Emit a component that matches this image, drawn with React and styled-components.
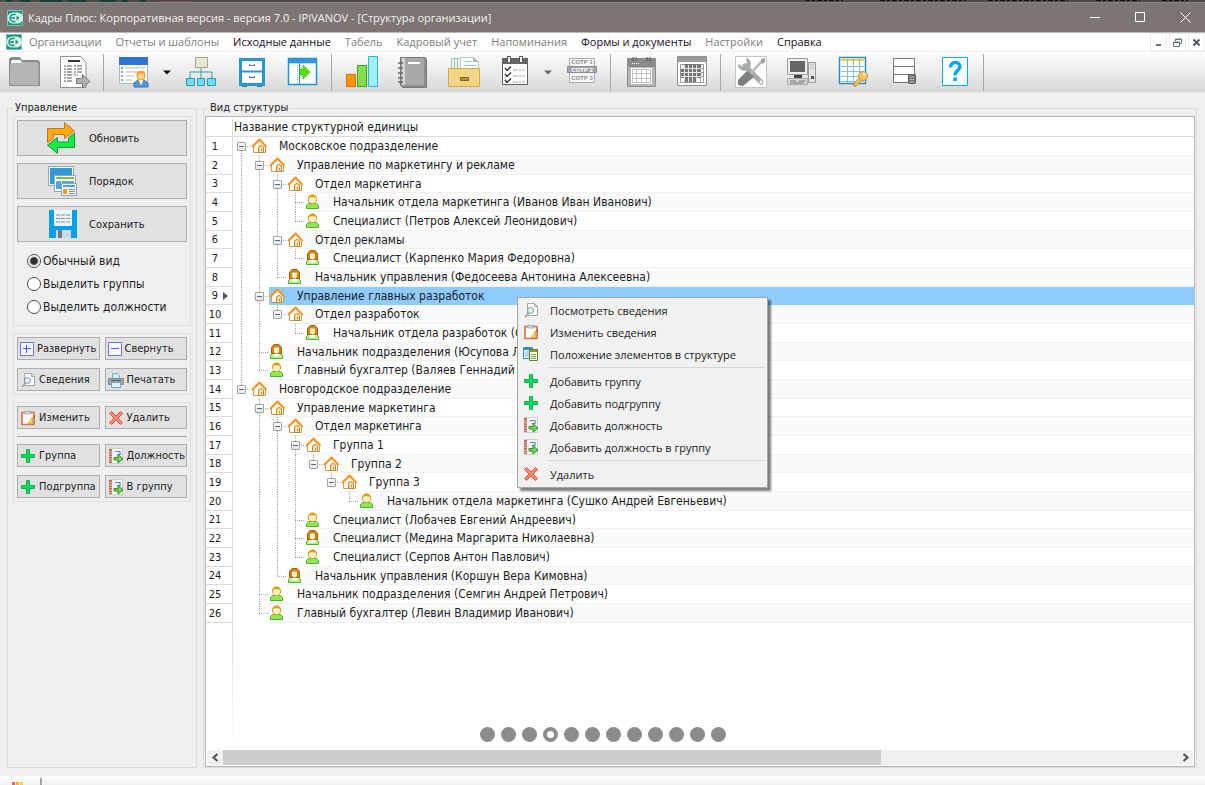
import React, { useState } from 'react';
import styled, { createGlobalStyle, css } from 'styled-components';

const GlobalStyle = createGlobalStyle`
  * {
    box-sizing: border-box;
  }

  body {
    margin: 0;
    overflow: hidden;
    background: #efefef;
    color: #1c1c24;
    font-family: 'DejaVu Sans Condensed', 'DejaVu Sans', sans-serif;
    font-size: 11px;
  }

  button,
  input {
    margin: 0;
    font: inherit;
    color: inherit;
  }

  svg {
    display: block;
    flex: none;
  }
`;

const uiFont = "'Open Sans', 'Noto Sans', sans-serif";

const Window = styled.div`
  position: relative;
  display: flex;
  flex-direction: column;
  height: 100vh;
`;

const Backdrop = styled.div`
  display: flex;
  flex: none;
  justify-content: space-between;
  height: 2px;
  background: #4b4949;
`;

const TitleBar = styled.header`
  display: flex;
  flex: none;
  align-items: center;
  height: 31px;
  padding-left: 7px;
  gap: 5px;
  background: #7c7573;
  border-top: 1px solid #8b8583;
  border-bottom: 1px solid #b9b6b5;
  color: #f4f2f1;
  font-family: ${uiFont};
`;

const Title = styled.h1`
  flex: 1;
  margin: 0;
  font-size: 11px;
  font-weight: 400;
  white-space: nowrap;
`;

const WindowButton = styled.button`
  display: flex;
  align-items: center;
  justify-content: center;
  width: 40px;
  height: 28px;
  padding: 0;
  border: 0;
  background: none;
`;

const MenuBar = styled.nav`
  display: flex;
  flex: none;
  align-items: center;
  height: 18px;
  padding-left: 6px;
  background: #fff;
  font-family: ${uiFont};
  font-size: 11px;
`;

const MenuLink = styled.button`
  padding: 0 7px;
  border: 0;
  background: none;
  line-height: 18px;
  white-space: nowrap;
  color: ${(p) => (p.$active ? '#1a0c1e' : '#7d7d80')};
`;

const MdiButtons = styled.div`
  display: flex;
  gap: 2px;
  margin-left: auto;
`;

const MdiButton = styled.button`
  display: flex;
  align-items: center;
  justify-content: center;
  width: 17px;
  height: 18px;
  padding: 0;
  border: 1px solid #ececec;
  background: #fff;
`;

const ToolBar = styled.div`
  display: flex;
  flex: none;
  align-items: center;
  gap: 4px;
  height: 42px;
  border-top: 1px solid #f0f0f0;
  border-bottom: 1px solid #e6e6e6;
  background: linear-gradient(#fdfdfd, #ececec 50%, #d6d6d6);
`;

const ToolButton = styled.button`
  display: flex;
  flex: none;
  align-items: center;
  justify-content: center;
  width: ${(p) => (p.$narrow ? 12 : 47)}px;
  height: 38px;
  padding: 0;
  border: 0;
  background: none;
`;

const ToolSeparator = styled.span`
  flex: none;
  width: 4px;
  height: 37px;
  border: solid transparent;
  border-width: 0 2px 0 1px;
  background: #a8a8a8;
  background-clip: padding-box;
`;

const Main = styled.main`
  display: flex;
  flex: 1;
  gap: 6px;
  min-height: 0;
  padding: 8px 8px 8px 7px;
`;

const Group = styled.fieldset`
  display: flex;
  flex: ${(p) => (p.$grow ? '1' : '0 0 190px')};
  flex-direction: column;
  gap: 7px;
  min-width: 0;
  margin: 0;
  padding: ${(p) => (p.$grow ? '1px 1px 0' : '1px 5px')};
  border: 1px solid #dcdcdc;
`;

const Legend = styled.legend`
  margin-left: ${(p) => p.$inset}px;
  padding: 0 2px;
  line-height: 14px;
`;

const Panel = styled.section`
  display: flex;
  flex-direction: column;
  gap: 7px;
  padding: 3px;
  border: 1px solid #dfdfdf;
`;

const buttonFace = css`
  display: flex;
  align-items: center;
  border: 1px solid #adadad;
  background: #e1e1e1;
  white-space: nowrap;
`;

const BigButton = styled.button`
  ${buttonFace}
  gap: 12px;
  height: 36px;
  padding: 0 0 0 27px;
`;

const SmallButton = styled.button`
  ${buttonFace}
  gap: 3px;
  min-width: 0;
  height: 23px;
  padding: 0 0 0 2px;
`;

const ButtonPair = styled.div`
  display: grid;
  grid-template-columns: 1fr 1fr;
  gap: 5px;

  & + & {
    margin-top: 1px;
  }
`;

const Divider = styled.hr`
  width: 100%;
  margin: 0;
  border: 0;
  border-top: 1px solid #a3a3a3;
`;

const RadioList = styled.div`
  display: flex;
  flex-direction: column;
  padding-bottom: 4px;
`;

const RadioLabel = styled.label`
  display: flex;
  align-items: center;
  gap: 2px;
  height: 23px;
  padding-left: 10px;
  font-size: 12px;
`;

const Radio = styled.input`
  appearance: none;
  width: 14px;
  height: 14px;
  border: 1px solid #4a4a4a;
  border-radius: 50%;
  background: #fff;

  &:checked {
    background: radial-gradient(#2e2e2e 0 3px, #fff 5px);
  }
`;

const GridBox = styled.div`
  display: flex;
  flex: 1;
  flex-direction: column;
  min-height: 0;
  border: 1px solid #b4b4bb;
  background: #fff;
`;

const Tree = styled.table`
  width: 100%;
  border-collapse: separate;
  border-spacing: 0;
  table-layout: fixed;

  th,
  td {
    height: 19px;
    padding: 0;
    font-weight: 400;
    text-align: left;
  }

  thead th {
    height: 20px;
  }

  tbody tr:nth-child(3n) > * {
    height: 18px;
  }
`;

const NumberHead = styled.th`
  width: 27px;
  border-right: 1px solid #dcdcdc;
  border-bottom: 1px solid #dcdcdc;
`;

const NameHead = styled.th`
  border-bottom: 1px solid #dcdcdc;
  font-size: 12px;
  text-indent: 1px;
`;

const NumberCell = styled.th`
  border-right: 1px solid #dcdcdc;
  border-bottom: 1px solid #dcdcdc;
`;

const NumberLine = styled.span`
  display: flex;
  align-items: center;
  justify-content: space-between;
  padding: 0 3px 0 1px;

  span {
    width: 16px;
    text-align: center;
  }
`;

const RowLine = styled.div`
  display: flex;
  height: 100%;
`;

const vLine = 'repeating-linear-gradient(#a8a8a8 0 1px, transparent 1px 2px) no-repeat';
const hLine = 'repeating-linear-gradient(90deg, #a8a8a8 0 1px, transparent 1px 2px) no-repeat';

const guides = {
  none: 'none',
  through: `${vLine} 8px 0 / 1px 100%`,
  middle: `${vLine} 8px 0 / 1px 100%, ${hLine} 8px 50% / 10px 1px`,
  last: `${vLine} 8px 0 / 1px 50%, ${hLine} 8px 50% / 10px 1px`,
  first: `${vLine} 8px 100% / 1px 50%, ${hLine} 8px 50% / 10px 1px`,
};

const Guide = styled.span`
  display: flex;
  flex: none;
  align-items: center;
  width: 18px;
  padding-left: 4px;
  background: ${(p) => guides[p.$kind]};
`;

const Toggle = styled.button`
  display: flex;
  align-items: center;
  justify-content: center;
  width: 9px;
  height: 9px;
  padding: 0;
  border: 1px solid #a2a2a2;
  border-radius: 1px;
  background: linear-gradient(#fff, #e6e6e6);

  &::before {
    content: '';
    width: 5px;
    height: 1px;
    background: #4a63b8;
  }
`;

const NodeLine = styled.span`
  display: flex;
  flex: 1;
  align-items: center;
  gap: 12px;
  min-width: 0;
  border-bottom: 1px solid ${(p) => (p.$selected ? '#8ecbff' : '#f1f1f1')};
  background: ${(p) => (p.$selected ? '#8ecbff' : p.$even ? '#fafafa' : '#fff')};
  font-size: 12px;
  white-space: nowrap;
`;

const EmptyArea = styled.div`
  flex: 1;
  width: 27px;
  border-right: 1px solid;
  border-image: linear-gradient(#dcdcdc, #fff) 1;
`;

const ScrollBar = styled.div`
  display: flex;
  flex: none;
  height: 15px;
  margin: 0 1px 1px;
  background: #efefef;
`;

const ScrollButton = styled.button`
  display: flex;
  align-items: center;
  justify-content: center;
  width: 16px;
  padding: 0;
  border: 0;
  background: #f0f0f0;
`;

const ScrollTrack = styled.div`
  flex: 1;
`;

const ScrollThumb = styled.div`
  width: 69%;
  height: 100%;
  background: #cdcdcd;
`;

const StatusBar = styled.footer`
  display: flex;
  flex: none;
  gap: 16px;
  height: 9px;
  padding: 2px 0 0 12px;
  background: linear-gradient(#fff, #f0f0f0);
  overflow: hidden;
`;

const StatusSeparator = styled.span`
  width: 2px;
  background: #a5a5a5;
`;

const ContextMenu = styled.div`
  position: absolute;
  top: 297px;
  left: 517px;
  display: flex;
  flex-direction: column;
  width: 251px;
  padding: 1px 2px 2px;
  border: 1px solid #a5a5a5;
  background: #f1f1f1;
  box-shadow: 3px 3px 2px rgba(0, 0, 0, 0.5);
`;

const ContextItem = styled.button`
  display: flex;
  align-items: center;
  gap: 11px;
  height: 22px;
  padding: 0 0 0 3px;
  border: 0;
  background: none;
  font-family: ${uiFont};
  font-size: 11px;
  white-space: nowrap;
`;

const ContextDivider = styled.hr`
  align-self: stretch;
  height: 1px;
  margin: 2px 0 2px 28px;
  border: 0;
  background: #d5d5d5;
`;

const Dots = styled.div`
  position: absolute;
  right: 0;
  bottom: 43px;
  left: 0;
  display: flex;
  justify-content: center;
  gap: 6px;
`;

const Dot = styled.button`
  width: 15px;
  height: 15px;
  padding: 0;
  border: 4px solid #8c8c8c;
  border-radius: 50%;
  background: ${(p) => (p.$current ? '#fff' : '#8c8c8c')};
`;

/* ---------- icons ---------- */

const Svg = ({ size = 32, box = 32, children }) => (
  <svg width={size} height={size} viewBox={`0 0 ${box} ${box}`} fill="none" aria-hidden="true">
    {children}
  </svg>
);

const LogoIcon = () => (
  <Svg size={16} box={16}>
    <rect x=".5" y=".5" width="15" height="15" fill="#169480" stroke="#7cc4b4" />
    <path d="M6 2.5h4.500a5.500 5.500 0 0 1 0 11H6a5.500 5.500 0 0 1 0-11z" fill="#d9f2e8" />
    <path d="M8.500 4.500H6.500a3.500 3.500 0 0 0 0 7h2M4 8h4" stroke="#169480" strokeWidth="1.500" />
    <path d="M9.500 5.500L12.500 8l-3 2.500z" fill="#169480" />
  </Svg>
);

const FolderIcon = () => (
  <Svg>
    <path d="M1 30V3l2-2h9l2 3h16l2 2v24z" fill="#8c8c8c" />
    <path d="M3 8V5.500L4.500 4H12l2 2h14.500l1.500 1.500V28H3z" fill="#fff" />
    <path d="M2 29V8.500L4 7h8l2-1h15l1.500 2v21z" fill="#b5b5b5" />
  </Svg>
);

const ReportIcon = () => (
  <Svg>
    <path d="M1.500 .500H22l5 6v25H1.500z" fill="#fff" stroke="#909090" />
    <path d="M9 5h12" stroke="#333" strokeWidth="2" />
    <path d="M5 10h8M5 13h8M5 16h8M5 19h8M5 22h8M5 25h8" stroke="#555" strokeWidth="1.200" strokeDasharray="2 1 5" />
    <path d="M15 10h8M15 13h8M15 16h8M15 19h4" stroke="#555" strokeWidth="1.200" strokeDasharray="2 1 5" />
    <path d="M17.500 22.500h6v-4l7.500 7-7.500 6v-4h-6z" fill="#b2b2b2" stroke="#777" />
  </Svg>
);

const PersonCardIcon = () => (
  <Svg>
    <path d="M1.500 1.500h28v26h-28z" fill="#fff" stroke="#b0b6be" />
    <path d="M1 1h29v8H1z" fill="#2f73d4" />
    <path d="M3 12h2M3 16h2M3 20h2M3 24h2" stroke="#4b84dd" strokeWidth="1.500" />
    <path d="M8 12h19M8 16h19M8 20h8M8 24h6" stroke="#b9b9b9" />
    <path d="M16 31v-4l4-3h6l4 3v4z" fill="#5798d9" stroke="#3671b6" />
    <path d="M20.500 23.500h5l-2.500 6z" fill="#fff" />
    <circle cx="23" cy="20" r="4" fill="#fbd28b" stroke="#e49a2c" />
    <path d="M18.500 20c-1-7 10-7 9 0l-2-2.500h-5z" fill="#f7a61c" />
  </Svg>
);

const CaretIcon = ({ color }) => (
  <Svg size={8} box={8}>
    <path d="M0 2.500h8L4 6.500z" fill={color} />
  </Svg>
);

const OrgIcon = () => (
  <Svg>
    <path d="M16 12v10M5 22v-6h22v6" stroke="#2d9fa0" />
    <path d="M10.500 1.500h12v10h-12z" fill="#e9e6d2" stroke="#a8a48b" />
    <path d="M1.500 22.500h8v7h-8zM12.500 22.500h7v7h-7zM22.500 22.500h8v7h-8z" fill="#6fdcf5" stroke="#2b9db1" />
  </Svg>
);

const CabinetIcon = () => (
  <Svg>
    <path d="M6 28h5v3H6zM21 28h5v3h-5z" fill="#2b7fae" />
    <path d="M4.500 3.500h23v25h-23z" fill="#fff" stroke="#2a96d2" strokeWidth="3" />
    <path d="M4 15.500h24" stroke="#2a96d2" strokeWidth="2" />
    <path d="M13.500 8v1.500h5V8M13.500 20v1.500h5V20" stroke="#777" strokeWidth="1.200" />
  </Svg>
);

const PaneIcon = () => (
  <Svg>
    <path d="M1.500 2.500h28v26h-28z" fill="#fff" stroke="#1f93d4" strokeWidth="1.500" />
    <path d="M2 3h27v4H2z" fill="#3a93de" />
    <path d="M2 7.500h27" stroke="#a8dcf8" />
    <path d="M12.500 7v21" stroke="#1f93d4" />
    <path d="M10.500 9v19" stroke="#999" strokeDasharray="1 1" />
    <path d="M13 13h3v-4l7 7-7 7v-4h-3z" fill="#52e500" stroke="#27ad11" strokeWidth=".6" />
  </Svg>
);

const ChartIcon = () => (
  <Svg>
    <path d="M.500 18.500h9v12h-9z" fill="#ff9600" stroke="#f0660f" />
    <path d="M11.500 9.500h9v21h-9z" fill="#84dc4e" stroke="#3aa71f" />
    <path d="M22.500 .500h9v30h-9z" fill="#a5edf6" stroke="#17c2d6" />
  </Svg>
);

const NotebookIcon = () => (
  <Svg>
    <path d="M3.500 1.500h25l1 2v28h-24l-2-2z" fill="#8e8e8e" stroke="#777" />
    <path d="M4 2h23v27H4z" fill="#a8a8a8" />
    <path d="M5 2h3v27H5z" fill="#d6d6d6" />
    <path d="M11 7h12" stroke="#fff" strokeWidth="2" />
    <path d="M1 7h5M1 12h5M1 17h5M1 22h5M1 26h5" stroke="#666" strokeWidth="1.500" />
  </Svg>
);

const ArchiveIcon = () => (
  <Svg>
    <path d="M3.500 14V2.500h9V14M6.500 3v10M9.500 3v10" stroke="#8fc9ae" />
    <path d="M12.500 14V1.500h13l5 4V14" fill="#fff" stroke="#a9d4c2" />
    <path d="M25 1l6 5h-6z" fill="#b5b5b5" />
    <path d="M17 5.500h7M17 9.500h11" stroke="#82cdb4" />
    <path d="M.500 12.500h31v18h-31z" fill="#f2d685" stroke="#d1aa4b" />
    <path d="M12 21h9v4h-9z" fill="#8a6426" />
    <path d="M13 23h7" stroke="#e8bd51" />
  </Svg>
);

const ChecklistIcon = () => (
  <Svg>
    <path d="M3.500 3.500h25v25h-25z" fill="#fff" stroke="#5f5f5f" />
    <path d="M3 2h26v6H3z" fill="#646464" />
    <path d="M8.500 6V.500h3V6M20.500 6V.500h3V6" fill="#eee" stroke="#555" />
    <path d="M6 12l2 2.500 4-4M6 18l2 2.500 4-4M6 24l2 2.500 4-4" stroke="#333" strokeWidth="1.400" />
    <path d="M14 14h12M14 20h12M14 26h12" stroke="#a5a5a5" strokeDasharray="5 1 2 1" />
  </Svg>
);

const StaffIcon = () => (
  <Svg>
    <path d="M3.500 2.500h25v24h-25z" fill="#f7f7f7" stroke="#aaa" />
    <path d="M1.500 10.500h29v6h-29z" fill="#a2a3ab" stroke="#8b8c94" />
    <g fontFamily="Liberation Sans" fontSize="6" fontWeight="700" textAnchor="middle">
      <text x="16" y="8" fill="#8d8d8d">СОТР 1</text>
      <text x="16" y="16" fill="#fff">СОТР 2</text>
      <text x="16" y="24" fill="#8d8d8d">СОТР 3</text>
    </g>
  </Svg>
);

const PlannerIcon = () => (
  <Svg>
    <path d="M2.500 2.500h28v28h-28z" fill="#b5b5b5" stroke="#8d8d8d" />
    <path d="M3 3h27v8H3z" fill="#8a8a8a" />
    <path d="M8 1v4M11 1v4M22 1v4M25 1v4" stroke="#555" />
    <path d="M7 7.500h8" stroke="#fff" strokeDasharray="1 1" />
    <path d="M6 12h21v16H6z" fill="#fff" />
    <path d="M7.500 13.500h18v13h-18zM7.500 17.500h18M7.500 22.500h18M11.500 13.500v13M16.500 13.500v13M21.500 13.500v13" stroke="#c0c0c0" />
  </Svg>
);

const TimesheetIcon = () => (
  <Svg>
    <path d="M1.500 .500h29v29h-29z" fill="#fff" stroke="#909090" />
    <path d="M2 1h28v5H2z" fill="#9a9a9a" />
    <path d="M4.500 8.500h23v18h-23zM4.500 12.500h23M4.500 16.500h23M4.500 20.500h23M8.500 8.500v18M12.500 8.500v18M16.500 8.500v18M20.500 8.500v18M24.500 8.500v18" stroke="#9a9a9a" />
    <path d="M8 8h13v18H8z" fill="#777" />
    <path d="M5 13h4v9H5zM21 8h4v14h-4z" fill="#777" />
    <path d="M5 12.500h20M5 16.500h20M5 20.500h20M8.500 9v17M12.500 9v17M16.500 9v17M20.500 9v17" stroke="#e5e5e5" />
  </Svg>
);

const SettingsIcon = () => (
  <Svg>
    <path d="M.500 .500h31v31H.500z" fill="#fff" stroke="#c6c6c6" />
    <path d="M10 10l16 16" stroke="#a8a8a8" strokeWidth="5" strokeLinecap="round" />
    <path d="M3 8a6 6 0 0 0 10 5 6 6 0 0 0-2-11l1 5-4 4z" fill="#a8a8a8" />
    <circle cx="26" cy="26" r="1.500" fill="#fff" />
    <path d="M29 3L16 17" stroke="#b5b5b5" strokeWidth="2.500" />
    <path d="M26 3l4-1v4l-3 2z" fill="#9d9d9d" />
    <path d="M12 15l7 6-11 9-5-1v-5z" fill="#7c7f7f" />
  </Svg>
);

const ComputerIcon = () => (
  <Svg>
    <path d="M1.500 2.500h20v16h-20z" fill="#eee" stroke="#999" />
    <path d="M4 5h15v11H4z" fill="#666" />
    <path d="M8 19h8v3H8z" fill="#444" />
    <path d="M1.500 22.500h20v6h-20z" fill="#d6d6d6" stroke="#aaa" />
    <path d="M4 25h6M13 25h6M4 27h14" stroke="#777" />
    <path d="M22.500 6.500h7v20h-7z" fill="#e3e3e3" stroke="#999" />
    <path d="M24 9h4M24 12h4" stroke="#b5b5b5" />
    <path d="M25 20h3v3h-3z" fill="#555" />
  </Svg>
);

const TableKeyIcon = () => (
  <Svg>
    <path d="M2.500 1.500h26v26h-26z" fill="#fff" stroke="#268fc5" strokeWidth="1.500" />
    <path d="M4 3h23v2H4z" fill="#f5cf34" />
    <path d="M4 10.500h23M4 15.500h23M4 20.500h23M4 25.500h23M10.500 3v24M16.500 3v24M22.500 3v24" stroke="#8abde3" />
    <path d="M17 30l7-8" stroke="#d39429" strokeWidth="4" />
    <path d="M18 29l6-7" stroke="#fbc863" strokeWidth="2" />
    <circle cx="26" cy="20" r="4.500" fill="#f7c362" stroke="#d39429" />
    <circle cx="27" cy="18.500" r="1.200" fill="#fff" />
  </Svg>
);

const ServerIcon = () => (
  <Svg>
    <path d="M5.500 2.500h21v24h-21zM5.500 10.500h21M5.500 18.500h21" fill="#fff" stroke="#777" />
    <rect x="20.500" y="18.500" width="7" height="9" rx="1" fill="#777" stroke="#5b5b5b" />
    <path d="M22 21h4M22 23.500h4M22 26h4" stroke="#d6d6d6" strokeDasharray="1.500 1" />
  </Svg>
);

const HelpIcon = () => (
  <Svg>
    <path d="M3.500 1.500h25v28h-25z" fill="#fff" stroke="#00b0df" />
    <path d="M11.500 11.500c0-7 9.500-6 9.500-1 0 4-5 3.500-5 9" stroke="#02a7ec" strokeWidth="3.400" />
    <path d="M14.300 21.500h3.500V25h-3.500z" fill="#02a7ec" />
  </Svg>
);

const RefreshIcon = () => (
  <Svg>
    <path d="M2.500 20.500V6.500h17v-6l10 8.500-10 7.500v-4h-11v4z" fill="#ffad0a" stroke="#c9702c" />
    <path d="M29.500 11v14.500h-17v6l-10-8.500 10-7.500V20h11v-4z" fill="#10ee45" stroke="#149a36" />
  </Svg>
);

const OrderIcon = () => (
  <Svg>
    <path d="M3.500 1.500h25v19h-25z" fill="#fff" stroke="#8ba2cb" />
    <path d="M5 3h22v16H5z" fill="#2f98d5" />
    <path d="M9.500 10.500h21v16h-21z" fill="#fff" stroke="#8ba2cb" />
    <path d="M11 12h18v2H11z" fill="#87bd36" />
    <path d="M11 16h5v8h-5zM17 16h12v2H17z" fill="#4ba5d9" />
    <path d="M16.500 18.500h15v12h-15z" fill="#fff" stroke="#8ba2cb" />
    <path d="M18 20h12v2H18z" fill="#4ba5d9" />
    <path d="M18 24h4v5h-4z" fill="#ff9c0d" />
    <path d="M24 24.500h6M24 26.500h6M24 28.500h6" stroke="#888" />
  </Svg>
);

const SaveIcon = () => (
  <Svg>
    <path d="M4 2h28v28H4z" fill="#00a1ea" />
    <path d="M9 2h18v16H9z" fill="#e9f8fb" />
    <path d="M11 7h14M11 10.500h14M11 14h14" stroke="#888" strokeDasharray="4 1" />
    <path d="M11 22h15v8H11z" fill="#c9dbe9" />
    <path d="M13 22h4v8h-4z" fill="#777" />
  </Svg>
);

const ExpandIcon = ({ minus }) => (
  <Svg size={14} box={14}>
    <path d="M.500 .500h13v13H.500z" fill="#f7f8ff" stroke="#6a74e2" />
    <path d={minus ? 'M3 6.500h8' : 'M3 6.500h8M6.500 3v8'} stroke="#4e5be0" />
  </Svg>
);

const InfoIcon = () => (
  <Svg size={16} box={16}>
    <path d="M4.500 1.500h7l3 3v9h-10z" fill="#fcfdfd" stroke="#9da6a8" />
    <path d="M11.500 1.500v3h3" stroke="#9da6a8" />
    <circle cx="7.500" cy="8.500" r="3" fill="#e2eff5" stroke="#89979d" />
    <path d="M5.500 11L2 15" stroke="#9aa4a8" strokeWidth="1.800" />
  </Svg>
);

const PrintIcon = () => (
  <Svg size={16} box={16}>
    <path d="M4.500 7V1.500h5l2 2V7" fill="#cdebf8" stroke="#6ba8c9" />
    <path d="M.500 6.500h15v6H.500z" fill="#a2a6aa" stroke="#84888d" />
    <path d="M3 8.500h10" stroke="#5b5e62" />
    <path d="M3.500 10.500h9v5h-9z" fill="#dff3fb" stroke="#6ba8c9" />
  </Svg>
);

const EditIcon = () => (
  <Svg size={16} box={16}>
    <path d="M2 2.500h12v12H2z" fill="#fdfbf7" stroke="#cf7444" strokeWidth="1.600" />
    <path d="M4.500 1.500h6v2.500h-6z" fill="#d5d5d5" stroke="#999" strokeWidth=".7" />
    <path d="M12.500 7L8 13.500h4.500z" fill="#f2e06a" stroke="#c7a433" strokeWidth=".8" />
    <path d="M13 6l2-1v4z" fill="#cd4737" />
  </Svg>
);

const DeleteIcon = () => (
  <Svg size={16} box={16}>
    <path
      d="M3.500 1.500L8 6l4.500-4.500 2 2L10 8l4.500 4.500-2 2L8 10l-4.500 4.500-2-2L6 8 1.500 3.500z"
      fill="#ff8a70"
      stroke="#e4513a"
    />
  </Svg>
);

const PlusIcon = () => (
  <Svg size={16} box={16}>
    <path d="M6.500 1.500h3v5h5v3h-5v5h-3v-5h-5v-3h5z" fill="#05dd5a" stroke="#0fb14b" />
  </Svg>
);

const PositionIcon = () => (
  <Svg size={16} box={16}>
    <path d="M1.500 .500h13v15h-13z" fill="#f4f4f4" stroke="#cfcfcf" />
    <path d="M2.500 1v14" stroke="#c96a50" strokeWidth="3" strokeDasharray="2 .600" />
    <path d="M7 3.500h5v3H9" stroke="#5684c9" strokeWidth="1.200" />
    <path d="M6 9.500h4v-3l5 4.500-5 4v-3H6z" fill="#7cd258" stroke="#2a8f2c" />
  </Svg>
);

const PlacementIcon = () => (
  <Svg size={16} box={16}>
    <path d="M.500 1.500h9v11h-9z" fill="#e9f6fd" stroke="#2b8ec5" />
    <path d="M1 2h8v2H1z" fill="#2b8ec5" />
    <path d="M2 6h4M2 8h4M2 10h4" stroke="#72b7df" />
    <path d="M6.500 3.500h8v11h-8z" fill="#fdfcef" stroke="#757a22" />
    <path d="M7 4h7v2H7z" fill="#8f9433" />
    <path d="M8 8.500h5M8 10.500h5M8 12.500h5" stroke="#69a852" />
  </Svg>
);

const HouseIcon = () => (
  <Svg size={16} box={16}>
    <path d="M2.500 7.500v7h12v-7l-6-5z" fill="#fffaf0" stroke="#c99a5c" />
    <path d="M7.500 14.500V10a2.500 2.500 0 0 1 5 0v4.500z" fill="#f7dfa6" stroke="#b9853c" />
    <path d="M10.500 11v2" stroke="#b9853c" />
    <path d="M1 9l7.500-7.500L15.500 9" stroke="#f7931a" strokeWidth="2" strokeLinejoin="round" />
  </Svg>
);

const ManIcon = () => (
  <Svg size={16} box={16}>
    <path d="M1.500 14.500V11.500l2-2h8l2 2v3z" fill="#93e64f" stroke="#4bb332" />
    <path d="M3.500 5c0-5.500 8-5.500 8 0v2L9 9.500H6L3.500 7z" fill="#fdf1c3" stroke="#dda12b" />
    <path d="M3.500 4c0-4.500 8-4.500 8 0-2-1-6-1-8 0z" fill="#e49b18" />
  </Svg>
);

const WomanIcon = () => (
  <Svg size={16} box={16}>
    <path d="M1.500 14.500V11.500l2-2h8l2 2v3z" fill="#b8ef90" stroke="#4bb332" />
    <path d="M2.500 9.500V3.500l2.500-3h5l2.500 3v6z" fill="#d4850f" stroke="#a75f06" />
    <path d="M5 3.500h5V8L8.500 9.500h-2L5 8z" fill="#fdf1c3" />
    <path d="M4 10h7l-1.500 2.500h-4z" fill="#fff" />
  </Svg>
);

const ChevronIcon = ({ right }) => (
  <Svg size={9} box={9}>
    <path d={right ? 'M2.500 1l4 3.500-4 3.500' : 'M6.500 1l-4 3.500L6.500 8'} stroke="#505050" strokeWidth="2" />
  </Svg>
);

const MarkerIcon = () => (
  <svg width="6" height="8" viewBox="0 0 6 8" aria-hidden="true">
    <path d="M0 0l5 4-5 4z" fill="#555" />
  </svg>
);

/* ---------- data ---------- */

const menu = [
  ['Организации'],
  ['Отчеты и шаблоны'],
  ['Исходные данные', true],
  ['Табель'],
  ['Кадровый учет'],
  ['Напоминания'],
  ['Формы и документы', true],
  ['Настройки'],
  ['Справка', true],
];

const tools = [
  ['Организации', FolderIcon],
  ['Отчеты', ReportIcon],
  null,
  ['Карточка', PersonCardIcon, '#111'],
  ['Структура', OrgIcon],
  ['Картотека', CabinetIcon],
  ['Панель', PaneIcon],
  null,
  ['Статистика', ChartIcon],
  ['Журнал', NotebookIcon],
  ['Архив', ArchiveIcon],
  ['Задачи', ChecklistIcon, '#666'],
  ['Сотрудники', StaffIcon],
  null,
  ['Календарь', PlannerIcon],
  ['Табель', TimesheetIcon],
  null,
  ['Настройки', SettingsIcon],
  ['Компьютер', ComputerIcon],
  ['Доступ', TableKeyIcon],
  ['Сервер', ServerIcon],
  ['Справка', HelpIcon],
  null,
];

// [level, type, name]
const rows = [
  [0, 'group', 'Московское подразделение'],
  [1, 'group', 'Управление по маркетингу и рекламе'],
  [2, 'group', 'Отдел маркетинга'],
  [3, 'man', 'Начальник отдела маркетинга (Иванов Иван Иванович)'],
  [3, 'man', 'Специалист (Петров Алексей Леонидович)'],
  [2, 'group', 'Отдел рекламы'],
  [3, 'woman', 'Специалист (Карпенко Мария Федоровна)'],
  [2, 'woman', 'Начальник управления (Федосеева Антонина Алексеевна)'],
  [1, 'group', 'Управление главных разработок'],
  [2, 'group', 'Отдел разработок'],
  [3, 'woman', 'Начальник отдела разработок (С'],
  [1, 'woman', 'Начальник подразделения (Юсупова Л'],
  [1, 'man', 'Главный бухгалтер (Валяев Геннадий И'],
  [0, 'group', 'Новгородское подразделение'],
  [1, 'group', 'Управление маркетинга'],
  [2, 'group', 'Отдел маркетинга'],
  [3, 'group', 'Группа 1'],
  [4, 'group', 'Группа 2'],
  [5, 'group', 'Группа 3'],
  [6, 'man', 'Начальник отдела маркетинга (Сушко Андрей Евгеньевич)'],
  [3, 'man', 'Специалист (Лобачев Евгений Андреевич)'],
  [3, 'woman', 'Специалист (Медина Маргарита Николаевна)'],
  [3, 'man', 'Специалист (Серпов Антон Павлович)'],
  [2, 'woman', 'Начальник управления (Коршун Вера Кимовна)'],
  [1, 'man', 'Начальник подразделения (Семгин Андрей Петрович)'],
  [1, 'man', 'Главный бухгалтер (Левин Владимир Иванович)'],
];

const contextItems = [
  [InfoIcon, 'Посмотреть сведения'],
  [EditIcon, 'Изменить сведения'],
  [PlacementIcon, 'Положение элементов в структуре'],
  null,
  [PlusIcon, 'Добавить группу'],
  [PlusIcon, 'Добавить подгруппу'],
  [PositionIcon, 'Добавить должность'],
  [PositionIcon, 'Добавить должность в группу'],
  null,
  [DeleteIcon, 'Удалить'],
];

const nodeIcons = { group: HouseIcon, man: ManIcon, woman: WomanIcon };

// is there another node on this level below the row, under the same parent
const hasNext = (index, level) => {
  for (let i = index + 1; i < rows.length; i += 1) {
    if (rows[i][0] < level) return false;
    if (rows[i][0] === level) return true;
  }
  return false;
};

const guideKind = (index, column) => {
  const level = rows[index][0];
  const next = hasNext(index, column);
  if (column < level) return next ? 'through' : 'none';
  if (index === 0) return 'first';
  return next ? 'middle' : 'last';
};

/* ---------- parts ---------- */

const TreeRow = ({ index, selected }) => {
  const [level, type, name] = rows[index];
  const Icon = nodeIcons[type];
  const columns = Array.from({ length: level + 1 }, (_, i) => i);

  return (
    <tr>
      <NumberCell scope="row">
        <NumberLine>
          <span>{index + 1}</span>
          {selected && <MarkerIcon />}
        </NumberLine>
      </NumberCell>
      <td>
        <RowLine>
          {columns.map((column) => (
            <Guide key={column} $kind={guideKind(index, column)}>
              {column === level && type === 'group' && <Toggle aria-label="Свернуть" />}
            </Guide>
          ))}
          <NodeLine $selected={selected} $even={index % 2 === 1}>
            <Icon />
            {name}
          </NodeLine>
        </RowLine>
      </td>
    </tr>
  );
};

const Controls = () => {
  const [view, setView] = useState('Обычный вид');

  return (
    <Group>
      <Legend $inset={0}>Управление</Legend>
      <Panel>
        <BigButton><RefreshIcon />Обновить</BigButton>
        <BigButton><OrderIcon />Порядок</BigButton>
        <BigButton><SaveIcon />Сохранить</BigButton>
        <RadioList>
          {['Обычный вид', 'Выделить группы', 'Выделить должности'].map((label) => (
            <RadioLabel key={label}>
              <Radio type="radio" name="view" checked={view === label} onChange={() => setView(label)} />
              {label}
            </RadioLabel>
          ))}
        </RadioList>
      </Panel>
      <Panel>
        <ButtonPair>
          <SmallButton><ExpandIcon />Развернуть</SmallButton>
          <SmallButton><ExpandIcon minus />Свернуть</SmallButton>
        </ButtonPair>
        <ButtonPair>
          <SmallButton><InfoIcon />Сведения</SmallButton>
          <SmallButton><PrintIcon />Печатать</SmallButton>
        </ButtonPair>
      </Panel>
      <Panel>
        <ButtonPair>
          <SmallButton><EditIcon />Изменить</SmallButton>
          <SmallButton><DeleteIcon />Удалить</SmallButton>
        </ButtonPair>
        <Divider />
        <ButtonPair>
          <SmallButton><PlusIcon />Группа</SmallButton>
          <SmallButton><PositionIcon />Должность</SmallButton>
        </ButtonPair>
        <ButtonPair>
          <SmallButton><PlusIcon />Подгруппа</SmallButton>
          <SmallButton><PositionIcon />В группу</SmallButton>
        </ButtonPair>
      </Panel>
    </Group>
  );
};

const Structure = () => (
  <Group $grow>
    <Legend $inset={3}>Вид структуры</Legend>
    <GridBox>
      <Tree>
        <thead>
          <tr>
            <NumberHead aria-label="Номер" />
            <NameHead scope="col">Название структурной единицы</NameHead>
          </tr>
        </thead>
        <tbody>
          {rows.map((row, index) => (
            <TreeRow key={row[2] + index} index={index} selected={index === 8} />
          ))}
        </tbody>
      </Tree>
      <EmptyArea />
      <ScrollBar>
        <ScrollButton aria-label="Влево"><ChevronIcon /></ScrollButton>
        <ScrollTrack><ScrollThumb /></ScrollTrack>
        <ScrollButton aria-label="Вправо"><ChevronIcon right /></ScrollButton>
      </ScrollBar>
    </GridBox>
  </Group>
);

const App = () => (
  <>
    <GlobalStyle />
    <Window>
      <Backdrop>
        <svg width="200" height="2" aria-hidden="true">
          <path d="M6 0h6v2H6zM20 0h10v2H20zM40 0h22v2H40zM68 0h18v2H68zM100 0h16v2h-16zM122 0h6v2h-6zM140 0h6v2h-6z" fill="#123f37" />
          <path d="M160 1h32v1h-32z" fill="#80504c" />
        </svg>
        <svg width="405" height="2" aria-hidden="true">
          <path d="M5 .500h38M80 .500h86M188 .500h80M296 .500h44M362 .500h26" stroke="#111" strokeDasharray="5 2 3 2" />
        </svg>
      </Backdrop>
      <TitleBar>
        <LogoIcon />
        <Title>Кадры Плюс: Корпоративная версия - версия 7.0 - IPIVANOV - [Структура организации]</Title>
        <WindowButton aria-label="Свернуть окно">
          <Svg size={11} box={11}><path d="M0 5.500h10" stroke="#fff" /></Svg>
        </WindowButton>
        <WindowButton aria-label="Развернуть окно">
          <Svg size={11} box={11}><path d="M.500 .500h9v9h-9z" stroke="#fff" /></Svg>
        </WindowButton>
        <WindowButton aria-label="Закрыть окно">
          <Svg size={11} box={11}><path d="M.500 .500l10 10M10.500 .500l-10 10" stroke="#fff" /></Svg>
        </WindowButton>
      </TitleBar>
      <MenuBar>
        <LogoIcon />
        {menu.map(([label, active]) => (
          <MenuLink key={label} $active={active}>{label}</MenuLink>
        ))}
        <MdiButtons>
          <MdiButton aria-label="Свернуть">
            <Svg size={9} box={9}><path d="M2 7h5" stroke="#667084" strokeWidth="2" /></Svg>
          </MdiButton>
          <MdiButton aria-label="Восстановить">
            <Svg size={9} box={9}><path d="M2.500 3V1h6v4.500H7M.500 4h6v4.500h-6zM2.500 1.500h6M.500 4.500h6" stroke="#667084" /></Svg>
          </MdiButton>
          <MdiButton aria-label="Закрыть">
            <Svg size={9} box={9}><path d="M1.500 1.500l6 6M7.500 1.500l-6 6" stroke="#4f586c" strokeWidth="2" /></Svg>
          </MdiButton>
        </MdiButtons>
      </MenuBar>
      <ToolBar>
        {tools.map((tool, index) => {
          if (!tool) return <ToolSeparator key={index} />;
          const [label, Icon, caret] = tool;
          return (
            <React.Fragment key={index}>
              <ToolButton aria-label={label}><Icon /></ToolButton>
              {caret && (
                <ToolButton $narrow aria-label={`${label}: список`}><CaretIcon color={caret} /></ToolButton>
              )}
            </React.Fragment>
          );
        })}
      </ToolBar>
      <Main>
        <Controls />
        <Structure />
      </Main>
      <StatusBar>
        <svg width="12" height="7" viewBox="0 0 12 7" aria-hidden="true">
          <path d="M0 4h3v3H0z" fill="#ff5c5c" />
          <path d="M4 4h3v3H4z" fill="#ffad3d" />
          <path d="M8 4h3v3H8z" fill="#ffd23d" />
        </svg>
        <StatusSeparator />
      </StatusBar>
      <Dots>
        {Array.from({ length: 12 }, (_, i) => (
          <Dot key={i} $current={i === 3} aria-label={`Слайд ${i + 1}`} />
        ))}
      </Dots>
      <ContextMenu role="menu">
        {contextItems.map((item, index) => {
          if (!item) return <ContextDivider key={index} />;
          const [Icon, label] = item;
          return <ContextItem key={index} role="menuitem"><Icon />{label}</ContextItem>;
        })}
      </ContextMenu>
    </Window>
  </>
);

export default App;
